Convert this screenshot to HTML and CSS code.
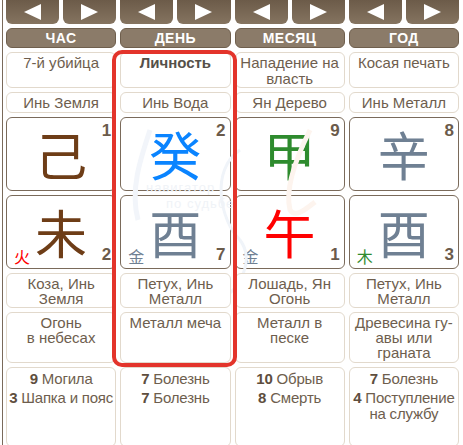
FILE: index.html
```html
<!DOCTYPE html>
<html lang="ru">
<head>
<meta charset="utf-8">
<title>Ба Цзы</title>
<link rel="stylesheet" href="styles.css">
</head>
<body>
<div class="page">
  <div class="board">
    <div class="nav"><span class="btn"><span class="tri tri-l"></span></span><span class="btn"><span class="tri tri-r"></span></span></div>
    <div class="nav"><span class="btn"><span class="tri tri-l"></span></span><span class="btn"><span class="tri tri-r"></span></span></div>
    <div class="nav"><span class="btn"><span class="tri tri-l"></span></span><span class="btn"><span class="tri tri-r"></span></span></div>
    <div class="nav"><span class="btn"><span class="tri tri-l"></span></span><span class="btn"><span class="tri tri-r"></span></span></div>

    <div class="head">Час</div>
    <div class="head">День</div>
    <div class="head">Месяц</div>
    <div class="head">Год</div>

    <div class="cell top">7-й убийца</div>
    <div class="cell top strong">Личность</div>
    <div class="cell top">Нападение на власть</div>
    <div class="cell top">Косая печать</div>

    <div class="cell mid">Инь Земля</div>
    <div class="cell mid">Инь Вода</div>
    <div class="cell mid">Ян Дерево</div>
    <div class="cell mid">Инь Металл</div>

    <div class="gcell"><span class="glyph earth">己</span><span class="num n-top">1</span></div>
    <div class="gcell"><span class="glyph water">癸</span><span class="num n-top">2</span></div>
    <div class="gcell"><span class="glyph wood">甲</span><span class="num n-top">9</span></div>
    <div class="gcell"><span class="glyph metal">辛</span><span class="num n-top">8</span></div>

    <div class="gcell"><span class="glyph earth">未</span><span class="elem fire">火</span><span class="num n-bot">2</span></div>
    <div class="gcell"><span class="glyph metal">酉</span><span class="elem metal">金</span><span class="num n-bot">7</span></div>
    <div class="gcell"><span class="glyph fire">午</span><span class="elem metal">金</span><span class="num n-bot">1</span></div>
    <div class="gcell"><span class="glyph metal">酉</span><span class="elem wood">木</span><span class="num n-bot">3</span></div>

    <div class="cell tight">Коза, Инь Земля</div>
    <div class="cell tight">Петух, Инь Металл</div>
    <div class="cell tight">Лошадь, Ян Огонь</div>
    <div class="cell tight">Петух, Инь Металл</div>

    <div class="cell tight">Огонь<br>в небесах</div>
    <div class="cell tight">Металл меча</div>
    <div class="cell tight">Металл в песке</div>
    <div class="cell tight">Древесина гу-<br>авы или<br>граната</div>

    <div class="cell list"><div class="item"><b>9</b> Могила</div><div class="item"><b>3</b> Шапка и пояс</div></div>
    <div class="cell list"><div class="item"><b>7</b> Болезнь</div><div class="item"><b>7</b> Болезнь</div></div>
    <div class="cell list"><div class="item"><b>10</b> Обрыв</div><div class="item"><b>8</b> Смерть</div></div>
    <div class="cell list"><div class="item"><b>7</b> Болезнь</div><div class="item"><b>4</b> Поступление на службу</div></div>

    <div class="watermark" aria-hidden="true">
      <svg class="wm-art" width="230" height="200" viewBox="0 0 230 200">
        <path d="M150 40 C120 60 130 110 150 130 C165 150 150 180 130 190" fill="none" stroke="#f0f4f9" stroke-width="3"/>
        <path d="M60 20 C50 50 40 80 48 110" fill="none" stroke="#f2f5fa" stroke-width="5"/>
        <path d="M220 20 C205 50 195 80 200 100 C205 108 215 100 225 92" fill="none" stroke="#fdf4ee" stroke-width="5"/>
      </svg>
      <span class="wm-t1">навигатор</span>
      <span class="wm-t2">по судьбе</span>
    </div>

    <div class="red-frame"></div>
  </div>
</div>
</body>
</html>
```

FILE: styles.css
```css
html, body {
  margin: 0;
  padding: 0;
  background: #ffffff;
}

body {
  font-family: "Liberation Sans", Arial, sans-serif;
  color: #6e5e4e;
}

.page {
  margin-left: 2px;
  border-left: 1px solid #7a6a5a;
  padding-left: 3px;
  height: 445px;
  overflow: hidden;
}

.board {
  position: relative;
  width: 453px;
  display: grid;
  grid-template-columns: repeat(4, 1fr);
  grid-template-rows: 24px 20px 36px 21px 74px 74px 35px 51px 80px;
  column-gap: 4px;
  row-gap: 4px;
}

/* nav buttons */
.nav {
  display: flex;
  gap: 4px;
}

.btn {
  flex: 1;
  display: flex;
  align-items: center;
  justify-content: center;
  background: linear-gradient(#6c5b49, #857460);
  border-radius: 0 0 6px 6px;
}

.tri {
  width: 0;
  height: 0;
  border-top: 8px solid transparent;
  border-bottom: 8px solid transparent;
}

.tri-l {
  border-right: 17px solid #ffffff;
}

.tri-r {
  border-left: 17px solid #ffffff;
}

/* column headers */
.head {
  display: flex;
  align-items: center;
  justify-content: center;
  background: #8b7b69;
  border: 1px solid #6f5f4d;
  border-radius: 6px;
  color: #ffffff;
  font-weight: bold;
  font-size: 14px;
  letter-spacing: 0.5px;
  text-transform: uppercase;
}

/* text cells */
.cell {
  position: relative;
  z-index: 1;
  box-sizing: border-box;
  background: #ffffff;
  border: 1px solid #e2d9cc;
  border-radius: 6px;
  text-align: center;
  font-size: 15px;
  line-height: 16px;
  padding: 2px 1px;
}

.cell.strong {
  font-weight: bold;
  color: #555049;
}

.cell.mid {
  display: flex;
  align-items: center;
  justify-content: center;
  padding: 0 1px;
}

.cell.tight {
  line-height: 15px;
  padding-top: 2px;
}

.cell.list {
  padding: 3px 0 0;
  letter-spacing: -0.2px;
}

.item {
  margin-bottom: 3px;
}

.item b {
  color: #5e4e3e;
}

/* glyph cells */
.gcell {
  position: relative;
  box-sizing: border-box;
  border: 1px solid #7a6a5a;
  border-radius: 6px;
  display: flex;
  align-items: center;
  justify-content: center;
}

.glyph {
  font-family: "Noto Sans CJK SC", "Noto Sans CJK JP", sans-serif;
  font-size: 52px;
  line-height: 48px;
}

.num {
  position: absolute;
  right: 4px;
  font-family: "Liberation Sans", Arial, sans-serif;
  font-weight: bold;
  font-size: 17px;
  line-height: 20px;
  color: #6b5b4b;
}

.n-top {
  top: 3px;
}

.n-bot {
  bottom: 3px;
}

.elem {
  position: absolute;
  left: 7px;
  bottom: 3px;
  font-family: "Noto Sans CJK SC", "Noto Sans CJK JP", sans-serif;
  font-size: 16px;
  line-height: 18px;
}

.earth { color: #6e3d17; }
.water { color: #0a84ff; }
.wood  { color: #2e8b2e; }
.metal { color: #6f8093; }
.fire  { color: #ff0000; }

/* watermark (sits behind the glyph cells) */
.watermark {
  position: absolute;
  left: 84px;
  top: 110px;
  width: 230px;
  height: 200px;
  pointer-events: none;
  z-index: 0;
}

.wm-art {
  position: absolute;
  left: 0;
  top: 0;
}

.wm-t1, .wm-t2 {
  position: absolute;
  font-family: "Liberation Sans", Arial, sans-serif;
  font-size: 13px;
  line-height: 13px;
  color: #f0f3f7;
  letter-spacing: 1px;
}

.wm-t1 {
  left: 56px;
  top: 71px;
}

.wm-t2 {
  left: 76px;
  top: 87px;
}

/* highlight frame */
.red-frame {
  position: absolute;
  z-index: 2;
  left: 106px;
  top: 50px;
  width: 125px;
  height: 317px;
  box-sizing: border-box;
  border: 4px solid #e3342b;
  border-radius: 10px;
  pointer-events: none;
}
```
